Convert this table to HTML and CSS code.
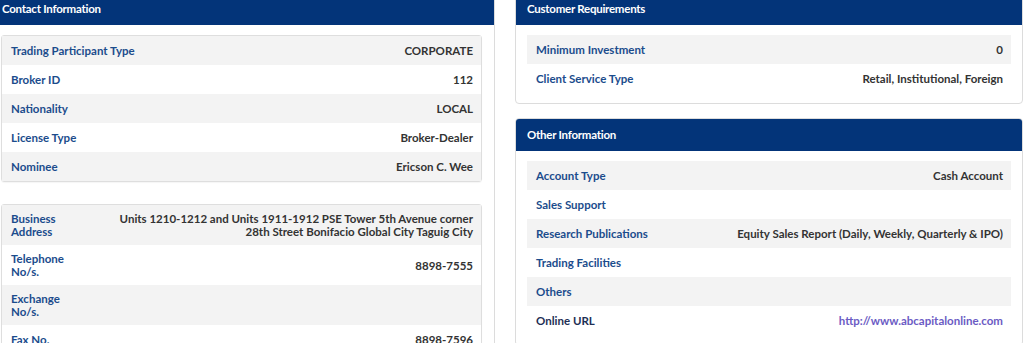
FILE: index.html
```html
<!DOCTYPE html>
<html>
<head>
<meta charset="utf-8">
<link rel="stylesheet" href="styles.css">
</head>
<body>
<div class="page">
  <section class="panel panel-left">
    <div class="panel-head">Contact Information</div>
    <div class="panel-body">
      <div class="card">
        <div class="row"><span class="label">Trading Participant Type</span><span class="value">CORPORATE</span></div>
        <div class="row"><span class="label">Broker ID</span><span class="value">112</span></div>
        <div class="row"><span class="label">Nationality</span><span class="value">LOCAL</span></div>
        <div class="row"><span class="label">License Type</span><span class="value">Broker-Dealer</span></div>
        <div class="row"><span class="label">Nominee</span><span class="value">Ericson C. Wee</span></div>
      </div>
      <div class="card card-narrow">
        <div class="row"><span class="label">Business Address</span><span class="value">Units 1210-1212 and Units 1911-1912 PSE Tower 5th Avenue corner<br>28th Street Bonifacio Global City Taguig City</span></div>
        <div class="row"><span class="label">Telephone No/s.</span><span class="value">8898-7555</span></div>
        <div class="row"><span class="label">Exchange No/s.</span><span class="value"></span></div>
        <div class="row"><span class="label">Fax No.</span><span class="value">8898-7596</span></div>
      </div>
    </div>
  </section>
  <div class="col-right">
    <section class="panel">
      <div class="panel-head">Customer Requirements</div>
      <div class="panel-body">
        <div class="table">
          <div class="row"><span class="label">Minimum Investment</span><span class="value">0</span></div>
          <div class="row"><span class="label">Client Service Type</span><span class="value">Retail, Institutional, Foreign</span></div>
        </div>
      </div>
    </section>
    <section class="panel">
      <div class="panel-head">Other Information</div>
      <div class="panel-body">
        <div class="table">
          <div class="row"><span class="label">Account Type</span><span class="value">Cash Account</span></div>
          <div class="row"><span class="label">Sales Support</span><span class="value"></span></div>
          <div class="row"><span class="label">Research Publications</span><span class="value">Equity Sales Report (Daily, Weekly, Quarterly &amp; IPO)</span></div>
          <div class="row"><span class="label">Trading Facilities</span><span class="value"></span></div>
          <div class="row"><span class="label">Others</span><span class="value"></span></div>
          <div class="row"><span class="label label-dark">Online URL</span><span class="value"><a class="link" href="#">http://www.abcapitalonline.com</a></span></div>
        </div>
      </div>
    </section>
  </div>
</div>
</body>
</html>
```

FILE: styles.css
```css
html, body {
  margin: 0;
  padding: 0;
  background: #ffffff;
  overflow: hidden;
}
body {
  font-family: Lato, "Open Sans", "Liberation Sans", sans-serif;
  font-size: 11.5px;
  font-weight: 700;
  color: #333333;
}
.page {
  display: grid;
  grid-template-columns: 505px 508px;
  column-gap: 20px;
  margin: -8px 0 0 -10px;
  align-items: start;
}
.col-right {
  display: flex;
  flex-direction: column;
  gap: 14px;
}
.panel {
  border: 1px solid #dcdcdc;
  border-radius: 4px;
  background: #fff;
  overflow: hidden;
}
.panel-left {
  min-height: 380px;
  border-radius: 0 4px 4px 0;
}
.panel-head {
  height: 32px;
  background: #033479;
  color: #ffffff;
  font-size: 11.5px;
  letter-spacing: -0.25px;
  line-height: 32px;
  padding-left: 11px;
}
.panel-body {
  padding: 10px 11px 10px 11px;
  display: flex;
  flex-direction: column;
  gap: 22px;
}
.panel-left .panel-body {
  padding: 10px 12px 10px 10px;
}
.card {
  border: 1px solid #dedede;
  border-radius: 3px;
  box-shadow: 0 1px 1px rgba(0,0,0,0.04);
}
.row {
  display: flex;
  justify-content: space-between;
  align-items: center;
  min-height: 29px;
  box-sizing: border-box;
  padding: 7px 8px 7px 9px;
  line-height: 13px;
}
.row:nth-child(odd) {
  background: #f3f3f3;
}
.label {
  color: #1b4c8c;
  flex: 0 0 auto;
}
.value {
  text-align: right;
  color: #333333;
}
.card-narrow .label {
  width: 70px;
}
.label-dark {
  color: #1e2f55;
}
.link {
  color: #6b5bc4;
  text-decoration: none;
}
```
